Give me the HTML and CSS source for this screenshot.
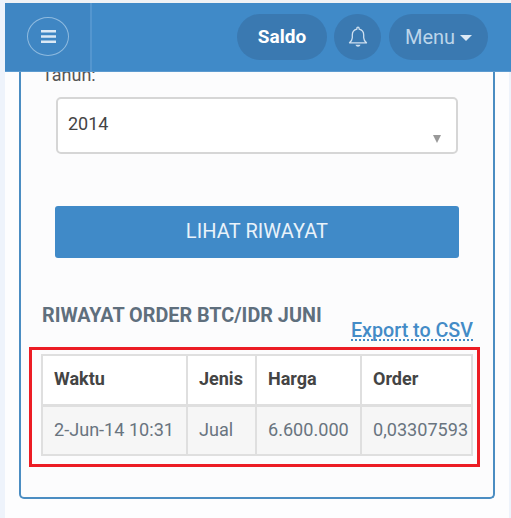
FILE: index.html
```html
<!DOCTYPE html>
<html lang="id">
<head>
<meta charset="utf-8">
<title>Riwayat Order</title>
<link rel="stylesheet" href="styles.css">
</head>
<body>
<div class="page">
  <header class="topbar">
    <div class="topbar-left">
      <span class="burger">
        <svg width="15" height="13" viewBox="0 0 15 13"><path d="M0 1.200h15M0 6.500h15M0 11.800h15" stroke="#dce9f5" stroke-width="2.400" fill="none"/></svg>
      </span>
    </div>
    <div class="topbar-right">
      <span class="pill pill-saldo">Saldo</span>
      <span class="pill pill-bell">
        <svg width="20" height="24" viewBox="0 0 20 24"><path d="M10 2.2c.7 0 1.1.5 1.1 1.2v.7c3 .6 4.6 3 4.6 6v2.600c0 2 .9 3.300 2.800 5.100H1.500c1.900-1.800 2.800-3.100 2.800-5.100v-2.600c0-3 1.600-5.400 4.600-6v-.7c0-.7.400-1.200 1.100-1.200z" fill="none" stroke="#cfe0f0" stroke-width="1.300" stroke-linejoin="round"/><path d="M7.500 19.800c.3 1.300 1.300 2 2.500 2s2.200-.7 2.500-2z" fill="#cfe0f0"/></svg>
      </span>
      <span class="pill pill-menu">Menu<i class="caret"></i></span>
    </div>
  </header>
  <main class="content">
    <section class="card">
      <label class="year-label">Tahun:</label>
      <div class="select">2014<i class="select-arrow"></i></div>
      <button class="submit" type="button">LIHAT RIWAYAT</button>
      <h2 class="title">RIWAYAT ORDER BTC/IDR JUNI</h2>
      <div class="export-row"><a class="export">Export to CSV</a></div>
      <div class="highlight">
        <table class="orders">
          <thead>
            <tr><th class="c1">Waktu</th><th class="c2">Jenis</th><th class="c3">Harga</th><th class="c4">Order</th></tr>
          </thead>
          <tbody>
            <tr><td>2-Jun-14 10:31</td><td>Jual</td><td>6.600.000</td><td>0,03307593</td></tr>
          </tbody>
        </table>
      </div>
    </section>
  </main>
</div>
</body>
</html>
```
FILE: styles.css
```css
* { box-sizing: border-box; }
html, body { margin: 0; height: 100%; }
body {
  background: #eef3fb;
  font-family: Roboto, "Liberation Sans", sans-serif;
  overflow: hidden;
}
.page {
  margin-left: 5px;
  padding-top: 3px;
  height: 518px;
  display: flex;
  flex-direction: column;
  background: linear-gradient(#f0f2f5 0 3px, transparent 3px);
}
.topbar {
  height: 69px;
  flex: none;
  display: flex;
  justify-content: space-between;
  background: #408ac8;
  border-bottom: 1px solid #5c9bd0;
}
.topbar-left {
  width: 87px;
  border-right: 2px solid #5496cf;
  background: #3f86c3;
  display: flex;
  align-items: center;
  padding-left: 22px;
  padding-bottom: 1px;
}
.burger {
  width: 42px;
  height: 39px;
  border: 1.500px solid #8ebadf;
  border-radius: 50%;
  display: flex;
  align-items: center;
  justify-content: center;
}
.topbar-right {
  display: flex;
  align-items: center;
  padding-right: 23px;
  padding-bottom: 1px;
}
.pill {
  height: 46px;
  border-radius: 23px;
  background: #3a79b1;
  display: flex;
  align-items: center;
  justify-content: center;
  font-size: 20px;
}
.pill-saldo { width: 90px; color: #fff; font-weight: 700; font-size: 19px; }
.pill-bell { width: 47px; margin: 0 8px 0 7px; }
.pill-menu { width: 99px; color: #bcd5ea; }
.caret {
  margin-left: 5px;
  margin-top: 2px;
  border-left: 6px solid transparent;
  border-right: 6px solid transparent;
  border-top: 6px solid #dce9f5;
}
.content {
  flex: 1;
  overflow: hidden;
  margin-right: 2px;
  background: #fdfdfe;
  padding: 0 15px 19px 14px;
}
.card {
  display: flow-root;
  height: 100%;
  border: 2px solid #4b8dc2;
  border-top: 0;
  border-radius: 0 0 5px 5px;
  background: #fcfcfd;
  margin-right: -1px;
  padding: 0 21px;
}
.year-label {
  display: block;
  margin-top: -6px;
  font-size: 18px;
  line-height: 18px;
  color: #555;
}
.select {
  position: relative;
  margin: 13px 14px 0 14px;
  height: 57px;
  border: 2px solid #d6d6d6;
  border-radius: 5px;
  background: #fff;
  padding: 13px 10px;
  font-size: 18px;
  line-height: 24px;
  color: #444;
}
.select-arrow {
  position: absolute;
  right: 15px;
  bottom: 9px;
  border-left: 4.500px solid transparent;
  border-right: 4.500px solid transparent;
  border-top: 8px solid #999;
}
.submit {
  display: block;
  margin: 52px 13px 0 13px;
  padding: 0 0 3px;
  width: 404px;
  height: 52px;
  border: 0;
  border-radius: 3px;
  background: #408ac8;
  color: #e9f2fa;
  font: 400 20px Roboto, sans-serif;
  letter-spacing: .1px;
}
.title {
  margin: 47px 0 0 0;
  font-size: 19.800px;
  line-height: 22px;
  font-weight: 700;
  color: #5f6f7d;
}
.export-row {
  display: flex;
  justify-content: flex-end;
  margin-top: -5px;
  margin-right: -1px;
}
.export {
  font-size: 19.700px;
  font-weight: 500;
  line-height: 17px;
  color: #438bc7;
  border-bottom: 2px dotted #438bc7;
}
.highlight {
  margin: 6px -8px 0 -13px;
  height: 120px;
  border: 3px solid #ec1c24;
  padding: 4px 5px 0 9px;
}
.orders {
  width: 430px;
  table-layout: fixed;
  border-collapse: collapse;
  border: 2px solid #dfdfdf;
  background: #fff;
}
.orders th, .orders td {
  border: 2px solid #dfdfdf;
  padding: 0 0 2px 11px;
  text-align: left;
  white-space: nowrap;
  overflow: hidden;
}
.orders th {
  height: 50px;
  font-size: 18px;
  font-weight: 700;
  color: #444;
  border-bottom-width: 3px;
}
.orders td {
  height: 50px;
  font-size: 18.100px;
  color: #69747f;
  background: #f6f6f6;
}
.c1 { width: 145px; }
.c2 { width: 69px; }
.c3 { width: 105px; }
.c4 { width: 111px; }
```
